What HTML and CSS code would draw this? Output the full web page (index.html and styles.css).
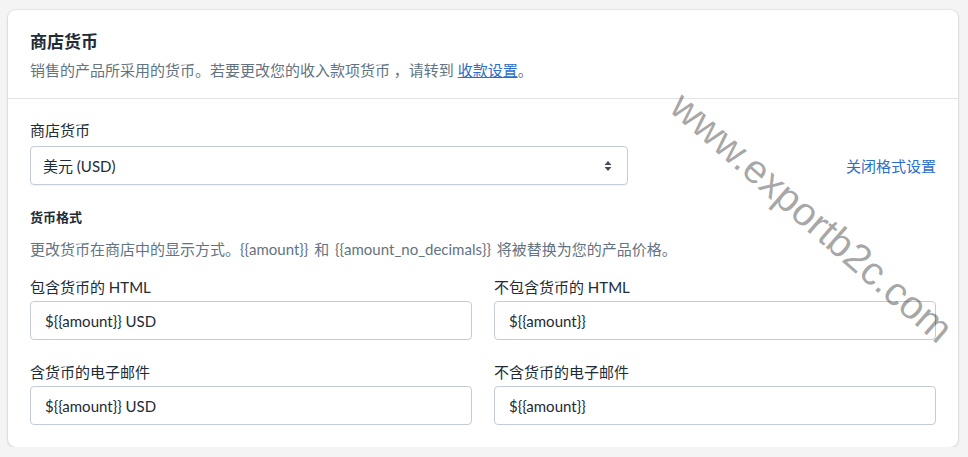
FILE: index.html
```html
<!DOCTYPE html>
<html lang="zh-CN">
<head>
    <meta charset="UTF-8">
    <meta name="viewport" content="width=device-width, initial-scale=1.0">
    <title>商店货币</title>
    <link rel="stylesheet" href="styles.css">
</head>
<body>
    <div class="card">
        <div class="card-header">
            <h2>商店货币</h2>
            <p>销售的产品所采用的货币。若要更改您的收入款项货币 ，请转到 <a href="#">收款设置</a>。</p>
        </div>
        <div class="card-body">
            <label class="label">商店货币</label>
            <div class="currency-row">
                <div class="select">
                    <span>美元 (USD)</span>
                    <svg class="arrows" width="10" height="14" viewBox="0 0 10 14">
                        <path d="M5 2 L8.5 6 H1.5 Z" fill="#454f5b"/>
                        <path d="M5 12 L8.5 8 H1.5 Z" fill="#454f5b"/>
                    </svg>
                </div>
                <a href="#" class="toggle">关闭格式设置</a>
            </div>

            <h3>货币格式</h3>
            <p class="help">更改货币在商店中的显示方式。{{amount}} 和 {{amount_no_decimals}} 将被替换为您的产品价格。</p>

            <div class="grid">
                <div class="field">
                    <label class="label">包含货币的 HTML</label>
                    <div class="input">${{amount}} USD</div>
                </div>
                <div class="field">
                    <label class="label">不包含货币的 HTML</label>
                    <div class="input">${{amount}}</div>
                </div>
                <div class="field">
                    <label class="label">含货币的电子邮件</label>
                    <div class="input">${{amount}} USD</div>
                </div>
                <div class="field">
                    <label class="label">不含货币的电子邮件</label>
                    <div class="input">${{amount}}</div>
                </div>
            </div>
        </div>
    </div>
    <div class="watermark">www.exportb2c.com</div>
</body>
</html>
```

FILE: styles.css
```css
body {
    font-family: Lato, "Noto Sans CJK SC", sans-serif;
    margin: 0;
    padding: 10px 10px 0 8px;
    background-color: #f4f4f4;
    color: #212b36;
    font-size: 15px;
}
.card {
    background-color: #fff;
    border-radius: 8px;
    box-shadow: 0 0 0 1px rgba(63, 63, 68, 0.05), 0 1px 3px rgba(63, 63, 68, 0.18);
}
.card-header {
    padding: 20px 22px 17px;
    border-bottom: 1px solid #e1e3e5;
}
.card-header h2 {
    margin: 0;
    font-size: 17px;
    line-height: 24px;
    font-weight: 700;
}
.card-header p {
    margin: 5px 0 0;
    line-height: 22px;
    color: #637381;
}
.card-header a {
    color: #2c6ecb;
}
.card-body {
    padding: 21px 22px 22px;
}
.label {
    display: block;
    line-height: 20px;
    margin-bottom: 6px;
}
.currency-row {
    display: flex;
    align-items: center;
    justify-content: space-between;
}
.select {
    flex: 0 0 66%;
    box-sizing: border-box;
    height: 39px;
    border: 1px solid #c4cdd5;
    border-radius: 4px;
    box-shadow: 0 1px 0 rgba(22, 29, 37, 0.05);
    display: flex;
    align-items: center;
    justify-content: space-between;
    padding: 0 14px 0 12px;
}
.toggle {
    color: #2c6ecb;
    text-decoration: none;
}
h3 {
    margin: 22px 0 0;
    font-size: 13px;
    line-height: 20px;
    font-weight: 700;
}
.help {
    margin: 12px 0 0;
    line-height: 20px;
    color: #637381;
    word-spacing: 2px;
}
.grid {
    display: grid;
    grid-template-columns: 1fr 1fr;
    column-gap: 22px;
    row-gap: 22px;
    margin-top: 18px;
}
.field .label {
    margin-bottom: 4px;
}
.input {
    box-sizing: border-box;
    height: 39px;
    border: 1px solid #c4cdd5;
    border-radius: 4px;
    display: flex;
    align-items: center;
    padding: 0 14px;
}
.watermark {
    position: absolute;
    left: 622px;
    top: 193px;
    width: 380px;
    text-align: center;
    font-family: "Liberation Sans", sans-serif;
    font-size: 40px;
    line-height: 48px;
    color: rgba(0, 0, 0, 0.35);
    transform: rotate(41deg);
    pointer-events: none;
}
```
